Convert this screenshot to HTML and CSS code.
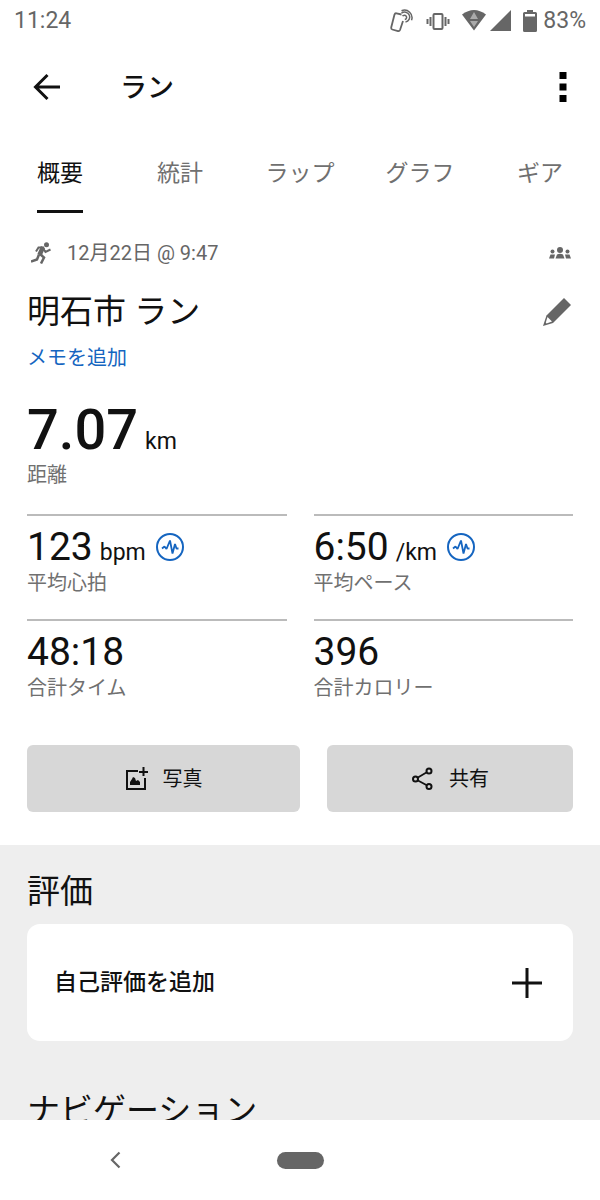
FILE: index.html
```html
<!DOCTYPE html>
<html lang="ja">
<head>
<meta charset="utf-8">
<meta name="viewport" content="width=device-width, initial-scale=1">
<title>明石市 ラン</title>
<link rel="stylesheet" href="styles.css">
</head>
<body>
<div class="status">
  <span>11:24</span>
  <div class="status-icons">
    <svg width="24" height="24" viewBox="0 0 24 24" fill="none" stroke="#666" stroke-width="1.500">
      <path stroke-width="1.800" d="M11.500 5.500L6.500 4.300Q5 4 4.500 5.500L1.200 18.500Q1 20 2.300 20.500L8 22Q9.500 22.300 10 21L13 12"/>
      <path d="M12.500 7.200a2.200 2.200 0 1 1 2.300 3.300M11.500 4.200a5 5 0 1 1 4 8.800M11.500 1.800a7.500 7.500 0 0 1 10 9.500"/>
    </svg>
    <svg width="24" height="24" viewBox="0 0 24 24" fill="none" stroke="#666" stroke-width="2">
      <rect x="7.500" y="5" width="9" height="15" rx="1"/>
      <path d="M1.500 10v5M4.500 8v9M19.500 8v9M22.500 10v5"/>
    </svg>
    <svg width="24" height="21" viewBox="0 0 24 21">
      <path fill="#666" d="M0 4.500Q12-4.500 24 4.500L12 20.500Z"/>
      <path fill="#aaa" d="M12 2l4 7H8zM8 11h8l-4 6z"/>
    </svg>
    <svg class="signal" width="21" height="21" viewBox="0 0 21 21"><path fill="#666" d="M21 0v21H0z"/></svg>
    <svg width="14" height="22" viewBox="0 0 14 22">
      <path fill="#666" d="M4 0h6v2h2.500Q14 2 14 3.500v17q0 1.500-1.500 1.500h-11Q0 22 0 20.500v-17Q0 2 1.500 2H4z"/>
      <path fill="#fff" d="M2 4h10v2.500H2z"/>
    </svg>
    <span class="percent">83%</span>
  </div>
</div>

<header class="toolbar">
  <button class="icon-btn" aria-label="戻る">
    <svg width="28" height="28" viewBox="0 0 28 28" fill="none" stroke="#111" stroke-width="3"><path d="M27 14H3M14.500 2L2.500 14L14.500 26"/></svg>
  </button>
  <h1>ラン</h1>
  <button class="icon-btn" aria-label="その他">
    <svg width="8" height="32" viewBox="0 0 8 32"><path fill="#000" d="M.5 1h7v7h-7zM.5 12.500h7v7h-7zM.5 24h7v7h-7z"/></svg>
  </button>
</header>

<nav class="tabs">
  <a href="#" class="active" aria-current="page">概要</a>
  <a href="#">統計</a>
  <a href="#">ラップ</a>
  <a href="#">グラフ</a>
  <a href="#">ギア</a>
</nav>

<main>
  <section class="summary">
    <div class="meta">
      <svg width="20" height="22" viewBox="0 0 20 22">
        <circle cx="15.500" cy="2.700" r="2.500" fill="#666"/>
        <path fill="none" stroke="#666" stroke-width="2" d="M5 9.500L7.500 5.500L13 5.500M12.500 7L14.500 10L19.500 7.500"/>
        <path fill="none" stroke="#666" stroke-width="4.500" d="M12 5L8.500 13"/>
        <path fill="none" stroke="#666" stroke-width="2.500" d="M9 12L13 15.500L10 21.500M8 12.500L6 17.500L0 19.500"/>
      </svg>
      <span>12月22日 @ 9:47</span>
      <svg class="people" width="22" height="12" viewBox="0 0 22 12" fill="#666">
        <circle cx="11" cy="3" r="3"/><circle cx="3.500" cy="4.500" r="2"/><circle cx="18.500" cy="4.500" r="2"/>
        <path d="M6.500 11.500L8 7.500Q11 6 14 7.500L15.500 11.500ZM0 11.500L1.500 7.500H6L5 11.500ZM17 11.500L16 7.500h4.500L22 11.500Z"/>
      </svg>
    </div>
    <div class="title-row">
      <h2>明石市 ラン</h2>
      <button class="icon-btn" aria-label="編集">
        <svg width="28" height="28" viewBox="0 0 28 28">
          <path fill="#666" d="M21 0L28 7L10 25L0 28L3.500 17.500Z"/>
          <path fill="#fff" d="M4.500 19L9 23.500L3.500 25.500L2.800 24.500Z"/>
        </svg>
      </button>
    </div>
    <a class="memo" href="#">メモを追加</a>
    <div class="distance">
      <p class="value"><b>7.07</b> <span class="unit">km</span></p>
      <p class="label">距離</p>
    </div>
    <div class="stats">
      <div class="stat">
        <p class="value">123 <span class="unit">bpm</span>
          <svg width="28" height="28" viewBox="0 0 28 28" fill="none" stroke="#1565c0"><circle cx="14" cy="14" r="13" stroke-width="2"/><path stroke-width="1.800" stroke-linejoin="bevel" d="M6 15.500L8.500 13.500L10.500 16L14 7.500L16.500 20.500L19 11L20.500 15.500H22.500"/></svg>
        </p>
        <p class="label">平均心拍</p>
      </div>
      <div class="stat">
        <p class="value">6:50 <span class="unit">/km</span>
          <svg width="28" height="28" viewBox="0 0 28 28" fill="none" stroke="#1565c0"><circle cx="14" cy="14" r="13" stroke-width="2"/><path stroke-width="1.800" stroke-linejoin="bevel" d="M6 15.500L8.500 13.500L10.500 16L14 7.500L16.500 20.500L19 11L20.500 15.500H22.500"/></svg>
        </p>
        <p class="label">平均ペース</p>
      </div>
      <div class="stat">
        <p class="value">48:18</p>
        <p class="label">合計タイム</p>
      </div>
      <div class="stat">
        <p class="value">396</p>
        <p class="label">合計カロリー</p>
      </div>
    </div>
    <div class="actions">
      <button>
        <svg width="24" height="24" viewBox="0 0 24 24"><path fill="none" stroke="#111" stroke-width="2" d="M13 4H2v18h18V11M14 5h9M18.500 0v9"/><path fill="#111" d="M5 18v-3l2-3 1-2 2 1 1 3 2-1 2 2v3z"/></svg>
        写真
      </button>
      <button>
        <svg width="24" height="24" viewBox="0 0 24 24" fill="none" stroke="#111" stroke-width="2"><circle cx="4.500" cy="12" r="2.500"/><circle cx="18" cy="4" r="2.500"/><circle cx="18" cy="19.500" r="2.500"/><path stroke-width="1.800" d="M6.500 10.800L15.800 5.300M6.500 13.200L15.800 18.300"/></svg>
        共有
      </button>
    </div>
  </section>

  <section class="more">
    <h2>評価</h2>
    <button class="card">
      自己評価を追加
      <svg width="32" height="32" viewBox="0 0 32 32" stroke="#111" stroke-width="3"><path d="M16 1v30M1 16h30"/></svg>
    </button>
    <h2>ナビゲーション</h2>
  </section>
</main>

<footer class="sysnav">
  <button class="icon-btn" aria-label="前の画面">
    <svg width="12" height="18" viewBox="0 0 12 18" fill="none" stroke="#666" stroke-width="2.200"><path d="M10.500 1.500L3 9L10.500 16.500"/></svg>
  </button>
  <button class="home" aria-label="ホーム"></button>
</footer>
</body>
</html>
```
FILE: styles.css
```css
* {
  box-sizing: border-box;
}

body {
  margin: 0;
  height: 100vh;
  display: flex;
  flex-direction: column;
  background: #fff;
  color: #111;
  font: 20px/28px Roboto, "Noto Sans CJK JP", sans-serif;
}

h1, h2, p {
  margin: 0;
  font-weight: 400;
}

button {
  border: 0;
  padding: 0;
  background: none;
  color: inherit;
  font: inherit;
}

a {
  color: inherit;
  text-decoration: none;
}

svg {
  display: block;
  flex: none;
}

.icon-btn {
  display: flex;
}

.status {
  flex: none;
  height: 41px;
  padding: 0 14px;
  display: flex;
  align-items: center;
  justify-content: space-between;
  color: #666;
  font-size: 23px;
}

.status-icons {
  display: flex;
  align-items: center;
  gap: 12px;
}

.status-icons .signal {
  margin-left: -8px;
}

.percent {
  margin-left: -6px;
}

.toolbar {
  flex: none;
  height: 92px;
  padding: 0 33px;
  display: flex;
  align-items: center;
}

.toolbar h1 {
  flex: 1;
  margin-left: 59px;
  font-size: 27px;
  line-height: 40px;
  padding-top: 2px;
  font-weight: 500;
}

.tabs {
  flex: none;
  display: grid;
  grid-template-columns: repeat(5, 1fr);
  justify-items: center;
  color: #707070;
  font-size: 23px;
}

.tabs a {
  height: 80px;
  line-height: 82px;
}

.tabs .active {
  color: #111;
  border-bottom: 3px solid #111;
}

main {
  flex: 1;
  min-height: 0;
  overflow: hidden;
}

.summary {
  padding: 26px 27px 33px;
}

.meta {
  display: flex;
  align-items: center;
  gap: 16px;
  padding-left: 4px;
  color: #666;
}

.people {
  margin-left: auto;
  margin-right: 2px;
}

.title-row {
  display: flex;
  align-items: center;
  justify-content: space-between;
  margin-top: 21px;
  padding-right: 2px;
}

h2 {
  font-size: 33px;
  line-height: 48px;
}

.memo {
  display: block;
  margin-top: 8px;
  color: #1565c0;
}

.distance {
  margin-top: 27px;
}

.value {
  display: flex;
  align-items: baseline;
  gap: 7px;
  font-size: 39px;
  line-height: 44px;
}

.distance .value {
  line-height: 62px;
}

.value b {
  font-size: 56px;
  font-weight: 500;
}

.value .unit {
  font-size: 23px;
  line-height: 24px;
}

.value svg {
  align-self: center;
  margin-left: 3px;
}

.label {
  color: #707070;
}

.stats {
  display: grid;
  grid-template-columns: 1fr 1fr;
  gap: 22px 27px;
  margin-top: 25px;
}

.stat {
  border-top: 2px solid #bbb;
  padding-top: 9px;
}

.actions {
  display: grid;
  grid-template-columns: 10fr 9fr;
  gap: 27px;
  margin-top: 43px;
}

.actions button {
  height: 67px;
  border-radius: 6px;
  background: #d7d7d7;
  display: flex;
  align-items: center;
  justify-content: center;
  gap: 14px;
}

.more {
  padding: 23px 27px;
  background: #eee;
}

.card {
  width: 100%;
  height: 117px;
  margin: 8px 0 46px;
  padding: 0 30px 0 27px;
  border-radius: 13px;
  background: #fff;
  display: flex;
  align-items: center;
  justify-content: space-between;
  font-size: 23px;
  font-weight: 500;
}

.sysnav {
  flex: none;
  height: 80px;
  display: grid;
  grid-template-columns: 230px 1fr 230px;
  align-items: center;
  justify-items: center;
}

.home {
  width: 47px;
  height: 17px;
  border-radius: 9px;
  background: #666;
}
```
